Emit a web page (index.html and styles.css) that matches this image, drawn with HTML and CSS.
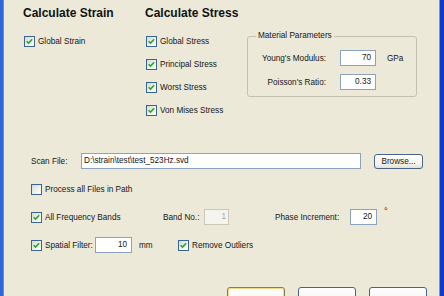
FILE: index.html
```html
<!DOCTYPE html>
<html>
<head>
<meta charset="utf-8">
<link rel="stylesheet" href="styles.css">
</head>
<body>
<div class="window">
  <div class="top">
    <div class="col strain">
      <h2 class="heading">Calculate Strain</h2>
      <div class="checks">
        <label class="chk"><span class="cb"><svg viewBox="0 0 11 11" width="9" height="9"><path d="M2 5.2 L4.3 7.4 L8.8 2.8" /></svg></span>Global Strain</label>
      </div>
    </div>
    <div class="col stress">
      <h2 class="heading">Calculate Stress</h2>
      <div class="checks">
        <label class="chk"><span class="cb"><svg viewBox="0 0 11 11" width="9" height="9"><path d="M2 5.2 L4.3 7.4 L8.8 2.8" /></svg></span>Global Stress</label>
        <label class="chk"><span class="cb"><svg viewBox="0 0 11 11" width="9" height="9"><path d="M2 5.2 L4.3 7.4 L8.8 2.8" /></svg></span>Principal Stress</label>
        <label class="chk"><span class="cb"><svg viewBox="0 0 11 11" width="9" height="9"><path d="M2 5.2 L4.3 7.4 L8.8 2.8" /></svg></span>Worst Stress</label>
        <label class="chk"><span class="cb"><svg viewBox="0 0 11 11" width="9" height="9"><path d="M2 5.2 L4.3 7.4 L8.8 2.8" /></svg></span>Von Mises Stress</label>
      </div>
    </div>
    <fieldset class="group">
      <legend class="legend">Material Parameters</legend>
      <div class="params">
        <span class="plabel">Young's Modulus:</span>
        <span class="field">70</span>
        <span class="unit">GPa</span>
        <span class="plabel">Poisson's Ratio:</span>
        <span class="field">0.33</span>
        <span class="unit"></span>
      </div>
    </fieldset>
  </div>

  <div class="lower">
    <div class="row">
      <span class="scan-label">Scan File:</span>
      <span class="field path">D:\strain\test\test_523Hz.svd</span>
      <span class="btn browse">Browse...</span>
    </div>
    <div class="row">
      <label class="chk"><span class="cb"></span>Process all Files in Path</label>
    </div>
    <div class="row">
      <label class="chk freq"><span class="cb"><svg viewBox="0 0 11 11" width="9" height="9"><path d="M2 5.2 L4.3 7.4 L8.8 2.8" /></svg></span>All Frequency Bands</label>
      <span class="band-label">Band No.:</span>
      <span class="field disabled band">1</span>
      <span class="phase-label">Phase Increment:</span>
      <span class="field phase">20</span>
      <span class="deg">°</span>
    </div>
    <div class="row">
      <label class="chk"><span class="cb"><svg viewBox="0 0 11 11" width="9" height="9"><path d="M2 5.2 L4.3 7.4 L8.8 2.8" /></svg></span><span class="spatial-label">Spatial Filter:</span></label>
      <span class="field spatial">10</span>
      <span class="mm">mm</span>
      <label class="chk"><span class="cb"><svg viewBox="0 0 11 11" width="9" height="9"><path d="M2 5.2 L4.3 7.4 L8.8 2.8" /></svg></span>Remove Outliers</label>
    </div>
  </div>

  <div class="buttons">
    <span class="btn big default" aria-label="OK"></span>
    <span class="btn big" aria-label="Cancel"></span>
    <span class="btn big" aria-label="Help"></span>
  </div>
</div>
</body>
</html>
```

FILE: styles.css
```css
html, body {
  margin: 0;
  padding: 0;
}
body {
  width: 444px;
  height: 296px;
  overflow: hidden;
  font-family: "Liberation Sans", Arial, sans-serif;
  font-size: 8.2px;
  color: #151515;
}
.window {
  box-sizing: border-box;
  width: 444px;
  height: 296px;
  overflow: hidden;
  background: #ECE9D8;
  border-left: 3px solid #2F66DA;
  border-right: 4px solid #0B3ACD;
  box-shadow: inset 1px 0 0 #5C8BEA, inset -1px 0 0 #6F95E8;
  padding-top: 6px;
}
.top {
  display: flex;
  align-items: flex-start;
  padding-left: 20px;
}
.strain { width: 122px; }
.stress { width: 102px; }
.heading {
  margin: 0;
  font-size: 12px;
  line-height: 14px;
  font-weight: 700;
  color: #111;
}
.checks {
  margin-top: 16px;
  padding-left: 1px;
  display: flex;
  flex-direction: column;
  gap: 12px;
}
.chk {
  display: flex;
  align-items: center;
  gap: 3px;
  height: 11px;
  line-height: 11px;
  white-space: nowrap;
}
.cb {
  box-sizing: border-box;
  width: 11px;
  height: 11px;
  flex: none;
  border: 1px solid #3A6492;
  background: linear-gradient(135deg, #D9D9D2 0%, #F2F2EE 60%, #FFFFFF 100%);
  display: flex;
  align-items: center;
  justify-content: center;
}
.cb svg path {
  fill: none;
  stroke: #22A822;
  stroke-width: 1.9;
}
.group {
  box-sizing: border-box;
  width: 170px;
  margin: 25px 0 0 0;
  padding: 9px 0 6px 0;
  border: 1px solid #C2C0AE;
  border-radius: 3px;
}
.legend {
  margin-left: 8px;
  padding: 0 2px;
  line-height: 10px;
}
.params {
  display: grid;
  grid-template-columns: 78px 36px auto;
  column-gap: 14px;
  row-gap: 8px;
  align-items: center;
}
.params .plabel {
  text-align: right;
  white-space: nowrap;
}
.params .unit {
  margin-left: -3px;
}
.field {
  box-sizing: border-box;
  height: 16px;
  line-height: 14px;
  border: 1px solid #8BA3BC;
  background: #fff;
  text-align: right;
  padding: 0 4px;
  white-space: nowrap;
  overflow: hidden;
}
.lower {
  margin-top: 37px;
  padding-left: 28px;
  display: flex;
  flex-direction: column;
  gap: 12px;
}
.row {
  display: flex;
  align-items: center;
  height: 16px;
  white-space: nowrap;
}
.scan-label { width: 50px; }
.path {
  width: 280px;
  text-align: left;
  padding-left: 2px;
}
.btn {
  box-sizing: border-box;
  display: flex;
  align-items: center;
  justify-content: center;
  border: 1px solid #4A6488;
  border-radius: 3px;
  background: linear-gradient(#FFFFFF, #F3F2EC 70%, #E3E1D6);
}
.browse {
  width: 49px;
  height: 15px;
  margin-left: 13px;
}
.freq { width: 132px; }
.band-label { width: 41px; }
.band { width: 25px; }
.disabled {
  border-color: #C9C7B8;
  background: #F5F4EE;
  color: #A8A79C;
  padding-right: 2px;
}
.phase-label {
  margin-left: 46px;
  width: 75px;
}
.phase { width: 27px; }
.deg {
  margin-left: 7px;
  align-self: flex-start;
  margin-top: -3px;
  font-size: 9px;
}
.spatial-label {
  display: inline-block;
  width: 50px;
}
.spatial { width: 37px; }
.mm {
  margin-left: 7px;
  width: 39px;
}
.buttons {
  margin-top: 34px;
  padding-left: 224px;
  display: flex;
  gap: 13px;
}
.big {
  width: 58px;
  height: 25px;
  flex: none;
}
.default {
  border-color: #8C7B4E;
  box-shadow: inset 0 0 0 1px #F7D58A;
}
```
